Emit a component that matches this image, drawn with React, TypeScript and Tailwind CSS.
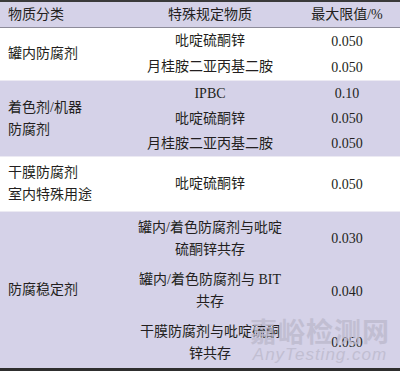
import React from 'react';

type Item = { name: React.ReactNode; limit: string; h: string };
type Group = { category: React.ReactNode; bg: string; items: Item[] };

const groups: Group[] = [
  {
    category: '罐内防腐剂',
    bg: 'bg-white',
    items: [
      { name: '吡啶硫酮锌', limit: '0.050', h: 'h-[26px]' },
      { name: '月桂胺二亚丙基二胺', limit: '0.050', h: 'h-[26px]' },
    ],
  },
  {
    category: (
      <>
        着色剂/机器
        <br />
        防腐剂
      </>
    ),
    bg: 'bg-[#d5d2e8]',
    items: [
      { name: 'IPBC', limit: '0.10', h: 'h-[25px]' },
      { name: '吡啶硫酮锌', limit: '0.050', h: 'h-[25px]' },
      { name: '月桂胺二亚丙基二胺', limit: '0.050', h: 'h-[25px]' },
    ],
  },
  {
    category: (
      <>
        干膜防腐剂
        <br />
        室内特殊用途
      </>
    ),
    bg: 'bg-white',
    items: [{ name: '吡啶硫酮锌', limit: '0.050', h: 'h-[54px]' }],
  },
  {
    category: '防腐稳定剂',
    bg: 'bg-[#d5d2e8]',
    items: [
      {
        name: (
          <>
            罐内/着色防腐剂与吡啶
            <br />
            硫酮锌共存
          </>
        ),
        limit: '0.030',
        h: 'h-[53px]',
      },
      {
        name: (
          <>
            罐内/着色防腐剂与 BIT
            <br />
            共存
          </>
        ),
        limit: '0.040',
        h: 'h-[52px]',
      },
      {
        name: (
          <>
            干膜防腐剂与吡啶硫酮
            <br />
            锌共存
          </>
        ),
        limit: '0.050',
        h: 'h-[51px]',
      },
    ],
  },
];

export default function App() {
  return (
    <div
      className="relative w-[400px] h-[372px] overflow-hidden bg-white text-[14px] text-[#231f20]"
      style={{ fontFamily: '"Liberation Serif", "Noto Sans CJK SC", serif' }}
    >
      <div className="border-t-2 border-[#3a3a3a]" />

      {/* Header */}
      <div className="flex h-[26px] items-center bg-[#d5d2e8] border-b border-[#8d8b99]">
        <div className="w-[130px] pl-2">物质分类</div>
        <div className="w-[160px] text-center">特殊规定物质</div>
        <div className="flex-1 text-center pl-1">最大限值/%</div>
      </div>

      {/* Body */}
      {groups.map((g, gi) => (
        <div
          key={gi}
          className={`flex ${g.bg} ${gi > 0 ? 'border-t border-[#eceaf3]' : ''}`}
        >
          <div className="w-[130px] pl-2 flex items-center leading-[22px]">
            <div>{g.category}</div>
          </div>
          <div className="flex-1 flex flex-col">
            {g.items.map((it, ii) => (
              <div key={ii} className={`flex items-center ${it.h}`}>
                <div className="w-[160px] text-center leading-[22px]">{it.name}</div>
                <div className="flex-1 text-center pl-1">{it.limit}</div>
              </div>
            ))}
          </div>
        </div>
      ))}

      <div className="border-t-[3px] border-[#2e2e2e]" />

      {/* Watermark */}
      <div className="pointer-events-none absolute right-[10px] bottom-[8px] flex flex-col items-center text-[#bdbacd] opacity-80">
        <div
          className="text-[27px] font-bold tracking-[1px] leading-[30px]"
          style={{ fontFamily: '"Noto Sans CJK SC", sans-serif' }}
        >
          嘉峪检测网
        </div>
        <div
          className="text-[17px] italic leading-[18px] tracking-[1px]"
          style={{ fontFamily: '"Liberation Sans", sans-serif' }}
        >
          AnyTesting.com
        </div>
      </div>
    </div>
  );
}
